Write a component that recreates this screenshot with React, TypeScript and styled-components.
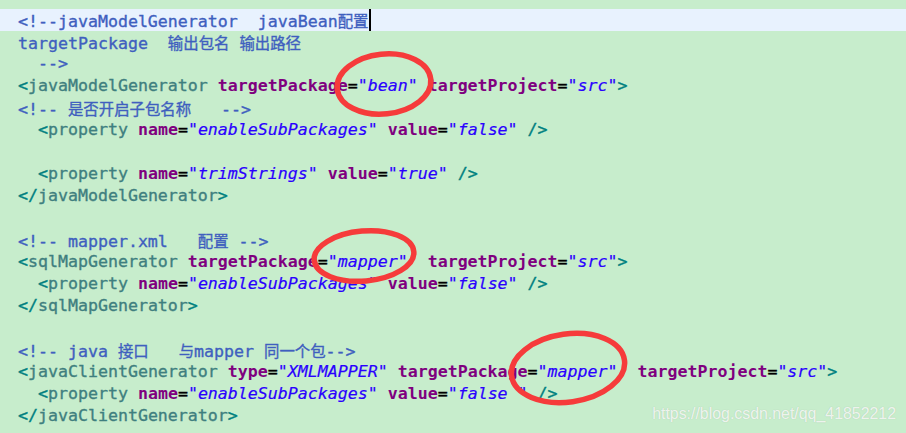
import styled, { createGlobalStyle } from 'styled-components';

const GlobalStyle = createGlobalStyle`
  html, body {
    margin: 0;
    padding: 0;
    background: #c7edcc;
  }
`;

const Editor = styled.div`
  position: relative;
  width: 906px;
  height: 433px;
  overflow: hidden;
  background: #c7edcc;
  padding-top: 9px;
  box-sizing: border-box;
  font-family: 'DejaVu Sans Mono', 'Noto Sans CJK SC', monospace;
  font-size: 16.6px;
  -webkit-text-stroke: 0.35px currentColor;
`;

const Line = styled.div<{ $active?: boolean }>`
  height: 22px;
  line-height: 22px;
  padding-left: 18px;
  white-space: pre;
  background: ${({ $active }) => ($active ? '#e8f2fe' : 'transparent')};
`;

const Comment = styled.span`
  color: #3f5fbf;
`;

const Bracket = styled.span`
  color: #008080;
`;

const TagName = styled.span`
  color: #3f7f7f;
`;

const AttrName = styled.span`
  color: #7f007f;
  font-weight: bold;
  -webkit-text-stroke: 0;
`;

const Eq = styled.span`
  color: #000;
`;

const Str = styled.span`
  color: #2a00ff;
  font-style: italic;
  -webkit-text-stroke: 0.2px currentColor;
`;

const Cjk = styled.span`
  font-family: 'Noto Sans CJK SC', sans-serif;
  font-size: 15.4px;
`;

const Caret = styled.span`
  display: inline-block;
  width: 2px;
  height: 22px;
  vertical-align: top;
  background: #000;
`;

const Marks = styled.svg`
  position: absolute;
  left: 0;
  top: 0;
  pointer-events: none;
`;

const Watermark = styled.div`
  position: absolute;
  right: 10px;
  bottom: 10px;
  font-family: 'Liberation Sans', Arial, sans-serif;
  font-size: 15.9px;
  color: rgba(255, 255, 255, 0.8);
  -webkit-text-stroke: 0;
  text-shadow: 0 0 1px rgba(150, 170, 150, 0.6);
`;

type Tok = [string, string];

// splits CJK runs out so they get the narrower fallback size
const withCjk = (text: string) =>
  text.split(/([\u4e00-\u9fff]+)/).map((part, i) =>
    /[\u4e00-\u9fff]/.test(part) ? <Cjk key={i}>{part}</Cjk> : part
  );

const renderTok = ([kind, text]: Tok, i: number) => {
  switch (kind) {
    case 'c':
      return <Comment key={i}>{withCjk(text)}</Comment>;
    case 'b':
      return <Bracket key={i}>{text}</Bracket>;
    case 't':
      return <TagName key={i}>{text}</TagName>;
    case 'a':
      return <AttrName key={i}>{text}</AttrName>;
    case '=':
      return <Eq key={i}>=</Eq>;
    case 's':
      return <Str key={i}>{text}</Str>;
    default:
      return <span key={i}>{text}</span>;
  }
};

const attr = (name: string, value: string, lead = ' '): Tok[] => [
  ['p', lead],
  ['a', name],
  ['=', '='],
  ['s', `"${value}"`],
];

const openTag = (name: string, attrs: Tok[], indent = ''): Tok[] => [
  ['p', indent],
  ['b', '<'],
  ['t', name],
  ...attrs,
  ['b', '>'],
];

const property = (name: string, value: string): Tok[] => [
  ['p', '  '],
  ['b', '<'],
  ['t', 'property'],
  ...attr('name', name),
  ...attr('value', value),
  ['p', ' '],
  ['b', '/>'],
];

const closeTag = (name: string): Tok[] => [
  ['b', '</'],
  ['t', name],
  ['b', '>'],
];

const lines: Tok[][] = [
  [['c', '<!--javaModelGenerator  javaBean配置']],
  [['c', 'targetPackage  输出包名 输出路径']],
  [['c', '  -->']],
  openTag('javaModelGenerator', [
    ...attr('targetPackage', 'bean'),
    ...attr('targetProject', 'src'),
  ]),
  [['c', '<!-- 是否开启子包名称   -->']],
  property('enableSubPackages', 'false'),
  [],
  property('trimStrings', 'true'),
  closeTag('javaModelGenerator'),
  [],
  [['c', '<!-- mapper.xml   配置 -->']],
  openTag('sqlMapGenerator', [
    ...attr('targetPackage', 'mapper'),
    ...attr('targetProject', 'src', '  '),
  ]),
  property('enableSubPackages', 'false'),
  closeTag('sqlMapGenerator'),
  [],
  [['c', '<!-- java 接口   与mapper 同一个包-->']],
  openTag('javaClientGenerator', [
    ...attr('type', 'XMLMAPPER'),
    ...attr('targetPackage', 'mapper'),
    ...attr('targetProject', 'src', '  '),
  ]),
  property('enableSubPackages', 'false '),
  closeTag('javaClientGenerator'),
];

const circles = [
  { cx: 384, cy: 84, rx: 47, ry: 30, rot: -6 },
  { cx: 364, cy: 256, rx: 50, ry: 25, rot: -5 },
  { cx: 568, cy: 368, rx: 57, ry: 34, rot: -8 },
];

export default function App() {
  return (
    <>
      <GlobalStyle />
      <Editor>
        {lines.map((toks, i) => (
          <Line key={i} $active={i === 0}>
            {toks.map(renderTok)}
            {i === 0 && <Caret />}
          </Line>
        ))}
        <Marks width={906} height={433}>
          {circles.map((c, i) => (
            <ellipse
              key={i}
              cx={c.cx}
              cy={c.cy}
              rx={c.rx}
              ry={c.ry}
              transform={`rotate(${c.rot} ${c.cx} ${c.cy})`}
              fill="none"
              stroke="#f63b3b"
              strokeWidth={5.5}
            />
          ))}
        </Marks>
        <Watermark>https://blog.csdn.net/qq_41852212</Watermark>
      </Editor>
    </>
  );
}
